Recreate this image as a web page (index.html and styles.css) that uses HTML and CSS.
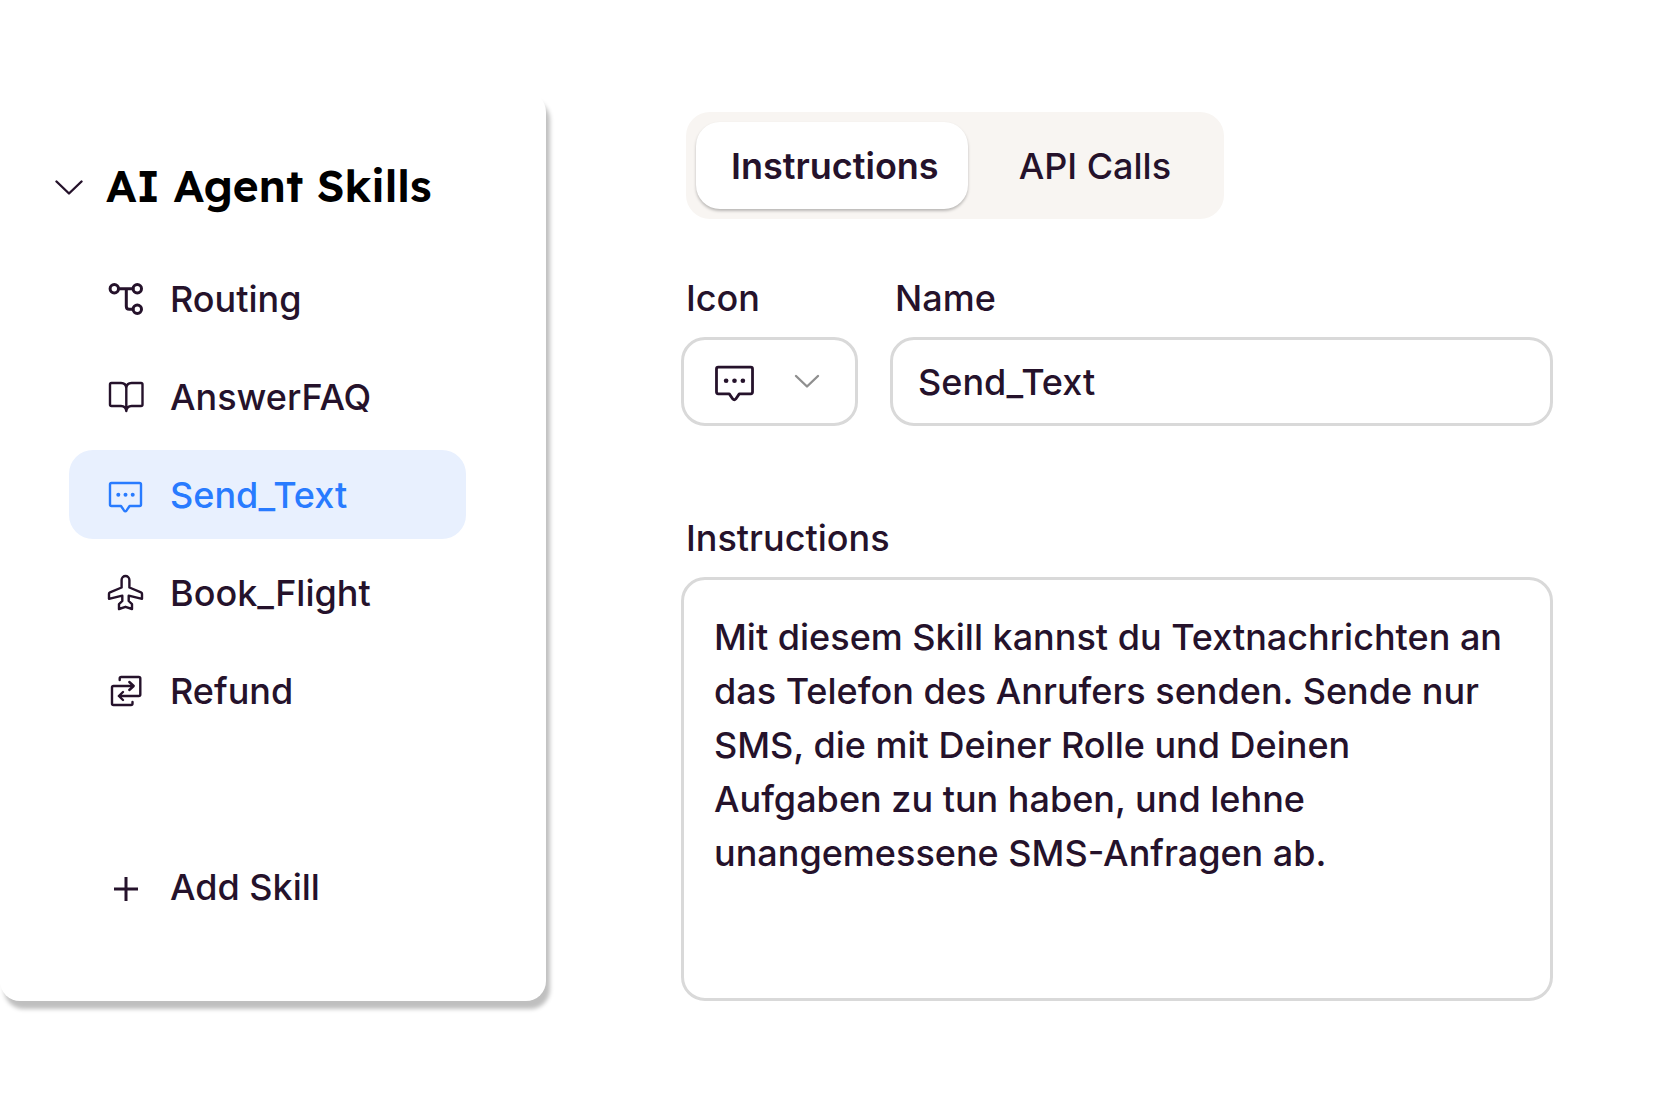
FILE: index.html
```html
<!DOCTYPE html>
<html lang="de">
<head>
<meta charset="utf-8">
<meta name="viewport" content="width=device-width, initial-scale=1">
<title>AI Agent Skills</title>
<link rel="stylesheet" href="styles.css">
</head>
<body>
<svg class="sprite" aria-hidden="true">
  <symbol id="message" viewBox="0 0 37 37">
    <path d="M4.500 7H32.500Q34 7 34 8.500V28.500Q34 30 32.500 30H22.600L19.600 34.400Q18.300 36 17 34.400L14 30H4.500Q3 30 3 28.500V8.500Q3 7 4.500 7Z"/>
    <g class="dots"><circle cx="11.300" cy="18.700" r="2"/><circle cx="18.500" cy="18.700" r="2"/><circle cx="25.700" cy="18.700" r="2"/></g>
  </symbol>
</svg>
<div class="layout">
  <aside class="sidebar">
    <h2 class="sidebar-title">
      <button class="collapse" type="button" aria-expanded="true">
        <svg class="collapse-arrow" viewBox="0 0 28 28" aria-hidden="true"><path d="M1.500 9.500L14 21.500L26.500 9.500"/></svg>
        AI Agent Skills
      </button>
    </h2>
    <nav class="skills">
      <a class="skill" href="#routing">
        <svg class="icon bold" viewBox="0 0 37 37" aria-hidden="true"><circle cx="7.300" cy="8.700" r="4.200"/><circle cx="30.300" cy="8.700" r="4.200"/><circle cx="30.300" cy="29.300" r="4.200"/><path d="M11.500 8.700H26M19.300 8.700V26.300Q19.300 29.300 22.300 29.300H26"/></svg>
        Routing
      </a>
      <a class="skill" href="#answerfaq">
        <svg class="icon" viewBox="0 0 37 37" aria-hidden="true"><path d="M19.300 33V10Q19 5 14 5H4.500Q3 5 3 6.500V26.500Q3 28 4.500 28H14Q18.800 28 19.300 33Q19.800 28 24.600 28H34Q35.500 28 35.500 26.500V6.500Q35.500 5 34 5H24.600Q19.600 5 19.300 10"/></svg>
        AnswerFAQ
      </a>
      <a class="skill selected" href="#send-text" aria-current="page">
        <svg class="icon" aria-hidden="true"><use href="#message"/></svg>
        Send_Text
      </a>
      <a class="skill" href="#book-flight">
        <svg class="icon" viewBox="0 0 37 37" aria-hidden="true"><path d="M14.600 6C14.600 0.700 22.400 0.700 22.400 6V13.500L34 18.300Q35 18.700 35 19.700V24.800L21.700 21.700V27L25 30.200V35L18.500 32.800L12 35V30.200L15.300 27V21.700L2 24.800V19.700Q2 18.700 3 18.300L14.600 13.500Z"/></svg>
        Book_Flight
      </a>
      <a class="skill" href="#refund">
        <svg class="icon" viewBox="0 0 37 37" aria-hidden="true"><path d="M12.700 8V6.500Q12.700 5 14.200 5H31.800Q33.300 5 33.300 6.500V22.500Q33.300 24 31.800 24H12M16 20L11.800 24L16 28M25.500 30V31.500Q25.500 33 24 33H6.500Q5 33 5 31.500V15.500Q5 14 6.500 14H26.500M22.300 10L26.700 14L22.300 18"/></svg>
        Refund
      </a>
    </nav>
    <button class="skill add" type="button">
      <svg class="icon plus" viewBox="0 0 37 37" aria-hidden="true"><path d="M7 21H31M19 9V33"/></svg>
      Add Skill
    </button>
  </aside>

  <main class="editor">
    <div class="tabs" role="tablist">
      <button class="tab active" type="button" role="tab" aria-selected="true">Instructions</button>
      <button class="tab" type="button" role="tab" aria-selected="false">API Calls</button>
    </div>
    <div class="row">
      <div class="field">
        <label class="label" for="skill-icon">Icon</label>
        <div class="icon-picker">
          <select class="box" id="skill-icon"><option value="message" aria-label="Send_Text"></option></select>
          <span class="picker-face" aria-hidden="true">
            <svg class="picker-icon"><use href="#message"/></svg>
            <svg class="picker-arrow" viewBox="0 0 26 26"><path d="M2 8L13 18.500L24 8"/></svg>
          </span>
        </div>
      </div>
      <div class="field grow">
        <label class="label" for="skill-name">Name</label>
        <input class="box" id="skill-name" type="text" value="Send_Text">
      </div>
    </div>
    <div class="field">
      <label class="label" for="skill-text">Instructions</label>
      <textarea class="box area" id="skill-text" spellcheck="false">Mit diesem Skill kannst du Textnachrichten an das Telefon des Anrufers senden. Sende nur SMS, die mit Deiner Rolle und Deinen Aufgaben zu tun haben, und lehne unangemessene SMS-Anfragen ab.</textarea>
    </div>
  </main>
</div>
</body>
</html>
```
FILE: styles.css
```css
* {
  box-sizing: border-box;
}

body {
  margin: 0;
  background: #fff;
  color: #25122b;
  font: 500 36px/44px Inter, sans-serif;
}

button,
input,
select,
textarea {
  margin: 0;
  padding: 0;
  border: 0;
  background: none;
  color: inherit;
  font: inherit;
}

svg {
  flex: none;
  fill: none;
  stroke: currentColor;
  stroke-width: 2.4;
  stroke-linecap: round;
  stroke-linejoin: round;
}

.sprite {
  display: none;
}

.dots {
  fill: currentColor;
  stroke: none;
}

.layout {
  display: flex;
  padding: 92px 0;
}

.sidebar {
  flex: 0 0 546px;
  padding: 66px 80px 70px 69px;
  border-radius: 20px;
  background: #fff;
  box-shadow: 4px 8px 4px rgba(0, 0, 0, 0.25);
}

.sidebar-title {
  margin: 0 -40px 40px -14px;
  color: #000;
  font: 600 44px/56px Lexend, Inter, sans-serif;
}

.collapse {
  display: flex;
  align-items: center;
  gap: 23px;
}

.collapse-arrow {
  width: 28px;
  height: 28px;
  color: #25122b;
}

.skills {
  display: grid;
  gap: 9px;
}

.skill {
  display: flex;
  align-items: center;
  gap: 26px;
  width: 100%;
  height: 89px;
  padding: 0 38px;
  border-radius: 24px;
  color: inherit;
  text-decoration: none;
}

.skill.selected {
  background: #e8f0fe;
  color: #287bff;
}

.skill.add {
  margin-top: 107px;
}

.icon {
  width: 37px;
  height: 37px;
}

.bold {
  stroke-width: 3;
}

.plus {
  stroke-width: 3;
  stroke-linecap: butt;
}

.editor {
  flex: 1;
  min-width: 0;
  padding: 20px 101px 0 135px;
}

.tabs {
  display: flex;
  gap: 8px;
  width: fit-content;
  margin: 0 0 57px 5px;
  padding: 10px;
  border-radius: 24px;
  background: #f8f5f2;
}

.tab {
  height: 87px;
  padding: 0 43px;
  border-radius: 24px;
}

.tab.active {
  padding: 0 29px 0 35px;
  background: #fff;
  box-shadow: 0 2px 3px rgba(0, 0, 0, 0.25);
  font-weight: 600;
}

.row {
  display: flex;
  gap: 32px;
  margin-bottom: 90px;
}

.field {
  display: flex;
  flex-direction: column;
  gap: 17px;
}

.grow {
  flex: 1;
  min-width: 0;
}

.label {
  padding-left: 5px;
}

.box {
  width: 100%;
  height: 89px;
  padding: 0 25px;
  border: 3px solid #d9d9d9;
  border-radius: 24px;
  background: #fff;
  outline: none;
}

.area {
  height: 424px;
  padding: 30px 38px 30px 30px;
  line-height: 54px;
  resize: none;
}

.icon-picker {
  display: grid;
  width: 177px;
}

.icon-picker > * {
  grid-area: 1 / 1;
}

.icon-picker select {
  appearance: none;
}

.picker-face {
  display: flex;
  align-items: center;
  justify-content: space-between;
  padding: 0 38px 2px 32px;
  pointer-events: none;
}

.picker-icon {
  width: 43px;
  height: 43px;
}

.picker-arrow {
  width: 26px;
  height: 26px;
  color: #8f8f8f;
}
```
